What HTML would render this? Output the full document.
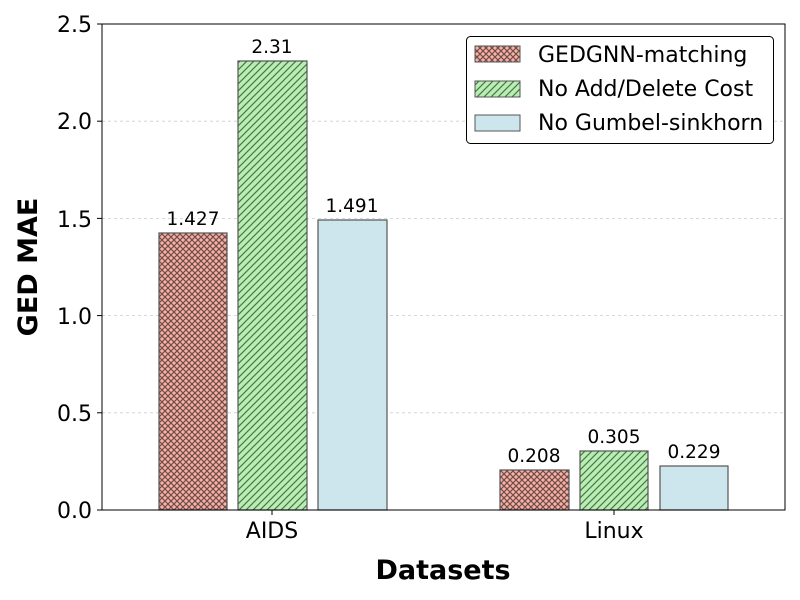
<!DOCTYPE html>
<html><head><style>body{margin:0;background:#fff}svg{display:block}text{font-family:"DejaVu Sans","Liberation Sans",sans-serif}</style></head><body>
<svg width="800" height="600" xmlns="http://www.w3.org/2000/svg">
<defs>
<pattern id="x" width="6" height="6" patternUnits="userSpaceOnUse"><rect width="6" height="6" fill="#f9b1a6"/><path d="M-1,-1L7,7M-1,7L7,-1M5,-1L7,1M-1,5L1,7" stroke="#6e4c47" stroke-width="1.2"/></pattern>
<pattern id="d" width="7" height="7" patternUnits="userSpaceOnUse"><rect width="7" height="7" fill="#b7efb2"/><path d="M-1,8L8,-1M-1,1L1,-1M6,8L8,6" stroke="#4e714e" stroke-width="1.2"/></pattern>
</defs>
<g stroke="#ccc" stroke-dasharray="3,3" stroke-width="0.8">
<line x1="102" x2="785" y1="121.2" y2="121.2"/><line x1="102" x2="785" y1="218.4" y2="218.4"/><line x1="102" x2="785" y1="315.6" y2="315.6"/><line x1="102" x2="785" y1="412.8" y2="412.8"/>
</g>
<g stroke="#555" stroke-width="1.2">
<rect x="159" y="233" width="68" height="277" fill="url(#x)"/>
<rect x="238" y="61" width="69" height="449" fill="url(#d)"/>
<rect x="318" y="220" width="69" height="290" fill="#cde6ee"/>
<rect x="500" y="470" width="69" height="40" fill="url(#x)"/>
<rect x="580" y="451" width="68" height="59" fill="url(#d)"/>
<rect x="660" y="466" width="68" height="44" fill="#cde6ee"/>
</g>
<rect x="102" y="24" width="683" height="486" fill="none" stroke="#000" stroke-width="1"/>
<g font-size="18.5" text-anchor="middle" fill="#000">
<text x="193" y="225">1.427</text><text x="272" y="53">2.31</text><text x="352" y="212">1.491</text>
<text x="534" y="462">0.208</text><text x="614" y="443">0.305</text><text x="694" y="458">0.229</text>
</g>
<g font-size="22" text-anchor="end">
<text x="92" y="518">0.0</text><text x="92" y="421">0.5</text><text x="92" y="324">1.0</text><text x="92" y="227">1.5</text><text x="92" y="129">2.0</text><text x="92" y="32">2.5</text>
</g>
<g stroke="#000"><line x1="97" x2="102" y1="510" y2="510"/><line x1="97" x2="102" y1="412.8" y2="412.8"/><line x1="97" x2="102" y1="315.6" y2="315.6"/><line x1="97" x2="102" y1="218.4" y2="218.4"/><line x1="97" x2="102" y1="121.2" y2="121.2"/><line x1="97" x2="102" y1="24" y2="24"/>
<line x1="272" x2="272" y1="510" y2="515"/><line x1="614" x2="614" y1="510" y2="515"/></g>
<g font-size="22" text-anchor="middle"><text x="272" y="538">AIDS</text><text x="614" y="538">Linux</text></g>
<text x="443" y="579" font-size="27" font-weight="bold" text-anchor="middle">Datasets</text>
<text transform="translate(37,267) rotate(-90)" font-size="27" font-weight="bold" text-anchor="middle">GED MAE</text>
<rect x="466.5" y="36.5" width="307" height="107" rx="4" fill="#fff" stroke="#000" stroke-width="1"/>
<g stroke="#555" stroke-width="1"><rect x="475" y="46" width="45" height="16" fill="url(#x)"/><rect x="475" y="81" width="45" height="16" fill="url(#d)"/><rect x="475" y="115" width="45" height="16" fill="#cde6ee"/></g>
<g font-size="22"><text x="538" y="62">GEDGNN-matching</text><text x="538" y="96">No Add/Delete Cost</text><text x="538" y="130">No Gumbel-sinkhorn</text></g>
</svg>
</body></html>
